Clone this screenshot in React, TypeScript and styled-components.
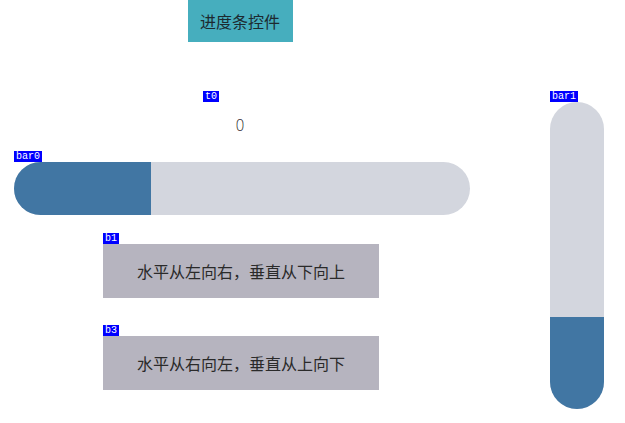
import { styled, createGlobalStyle } from "styled-components";

const Global = createGlobalStyle`
  html, body {
    margin: 0;
    padding: 0;
    background: #ffffff;
  }
  body {
    font-family: "Noto Sans CJK SC", "Noto Sans", sans-serif;
  }
`;

const Screen = styled.div`
  display: flex;
  align-items: flex-start;
  width: 625px;
  height: 423px;
  background: #ffffff;
  overflow: hidden;
`;

const MainColumn = styled.div`
  display: flex;
  flex-direction: column;
  align-items: center;
  width: 480px;
`;

const SideColumn = styled.div`
  display: flex;
  flex-direction: column;
  margin-left: 70px;
  padding-top: 91px;
`;

// a widget with its object name shown above the top-left corner
const Labeled = styled.div<{ $top?: number; $shift?: number }>`
  display: flex;
  flex-direction: column;
  align-items: flex-start;
  margin-top: ${(p) => p.$top ?? 0}px;
  margin-left: ${(p) => p.$shift ?? 0}px;
`;

const Tag = styled.div`
  height: 11px;
  padding: 0 2px;
  background: #0000ff;
  color: #ffffff;
  font-family: "Liberation Mono", "DejaVu Sans Mono", monospace;
  font-size: 10px;
  line-height: 11px;
`;

const Title = styled.div`
  display: flex;
  align-items: center;
  justify-content: center;
  width: 105px;
  height: 42px;
  background: #46aebe;
  color: #1d2a30;
  font-size: 16px;
`;

const Text = styled.div`
  display: flex;
  align-items: center;
  justify-content: center;
  width: 74px;
  height: 48px;
  color: #333333;
  font-family: "DejaVu Sans", sans-serif;
  font-size: 15px;
  font-weight: 300;
`;

const Track = styled.div<{ $w: number; $h: number; $vertical?: boolean }>`
  display: flex;
  flex-direction: ${(p) => (p.$vertical ? "column-reverse" : "row")};
  width: ${(p) => p.$w}px;
  height: ${(p) => p.$h}px;
  background: #d3d6de;
  border-radius: ${(p) => Math.min(p.$w, p.$h) / 2}px;
  overflow: hidden;
`;

const Fill = styled.div`
  background: #4176a3;
  flex: none;
`;

const Button = styled.div`
  display: flex;
  align-items: center;
  justify-content: center;
  width: 276px;
  height: 54px;
  background: #b6b4bf;
  color: #2a2a2a;
  font-size: 16px;
`;

const buttons = [
  { id: "b1", top: 18, text: "水平从左向右，垂直从下向上" },
  { id: "b3", top: 27, text: "水平从右向左，垂直从上向下" },
];

const value = 30;

export default function App() {
  return (
    <Screen>
      <Global />
      <MainColumn>
        <Title>进度条控件</Title>

        <Labeled $top={49}>
          <Tag>t0</Tag>
          <Text>0</Text>
        </Labeled>

        <Labeled $top={1} $shift={4}>
          <Tag>bar0</Tag>
          <Track $w={456} $h={53}>
            <Fill style={{ width: `${value}%` }} />
          </Track>
        </Labeled>

        {buttons.map((b) => (
          <Labeled key={b.id} $top={b.top} $shift={2}>
            <Tag>{b.id}</Tag>
            <Button>{b.text}</Button>
          </Labeled>
        ))}
      </MainColumn>

      <SideColumn>
        <Labeled>
          <Tag>bar1</Tag>
          <Track $w={54} $h={307} $vertical>
            <Fill style={{ height: `${value}%` }} />
          </Track>
        </Labeled>
      </SideColumn>
    </Screen>
  );
}
